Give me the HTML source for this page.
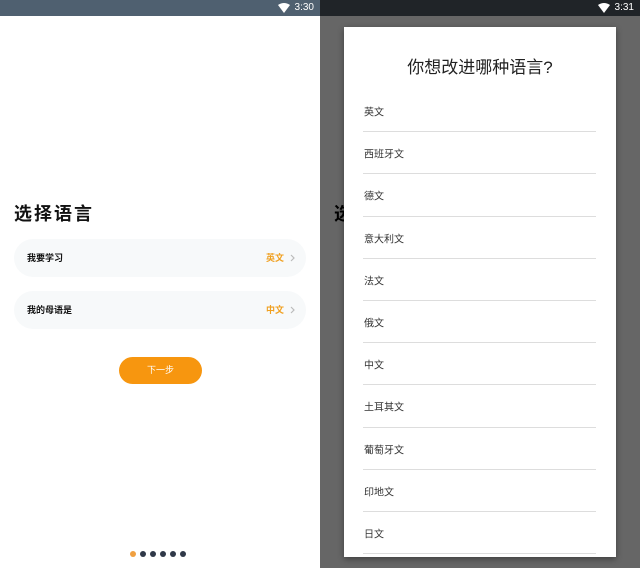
<!DOCTYPE html>
<html><head><meta charset="utf-8"><style>
*{margin:0;padding:0;box-sizing:border-box}
body{width:640px;height:568px;overflow:hidden;position:relative;background:#fff;font-family:"Liberation Sans","Noto Sans CJK SC",sans-serif}
.p{position:absolute;top:0;height:568px;width:320px;overflow:hidden}
.sb{position:absolute;left:0;top:0;width:320px;height:16px;color:#fff;font-size:10px}
.sb .t{position:absolute;right:6px;top:2px}
.sb svg{position:absolute;right:30px;top:3px}
.title{position:absolute;left:14px;top:200px;font-size:18px;font-weight:bold;color:#111;letter-spacing:2px}
.card{position:absolute;left:14px;width:292px;height:38px;border-radius:19px;background:#f7f9fa;font-size:9px;font-weight:bold}
.card .l{position:absolute;left:13px;top:12px;color:#111}
.card .r{position:absolute;right:22px;top:12px;color:#f0a020}
.card svg{position:absolute;right:11px;top:15px}
.btn{position:absolute;left:119px;top:357px;width:83px;height:27px;border-radius:14px;background:#f7960f;color:#fff;font-size:9px;text-align:center;line-height:27px}
.dot{position:absolute;top:551px;width:6px;height:6px;border-radius:3px;background:#2f3848}
.dlg{position:absolute;left:24px;top:27px;width:272px;height:530px;background:#fff;box-shadow:0 2px 6px rgba(0,0,0,.4)}
.dlg h2{position:absolute;top:26px;left:0;width:100%;text-align:center;font-size:17px;font-weight:normal;color:#222}
.it{position:absolute;left:19px;width:233px;height:42.2px;border-bottom:1.5px solid #ddd;font-size:10px;color:#333}
.it span{position:absolute;left:1px;top:21px;transform:translateY(-50%)}
</style></head><body>
<div class="p" style="left:0">
<div class="sb" style="background:#4f6070"><svg width="12" height="10" viewBox="0 0 12 10"><path d="M0 2Q6-2 12 2L6 10Z" fill="#fff"/></svg><span class="t">3:30</span></div>
<div class="title">选择语言</div>
<div class="card" style="top:239px"><span class="l">我要学习</span><span class="r">英文</span><svg width="5" height="8" viewBox="0 0 5 8"><path d="M1 1L4 4L1 7" stroke="#bbb" stroke-width="1.2" fill="none"/></svg></div>
<div class="card" style="top:291px"><span class="l">我的母语是</span><span class="r">中文</span><svg width="5" height="8" viewBox="0 0 5 8"><path d="M1 1L4 4L1 7" stroke="#bbb" stroke-width="1.2" fill="none"/></svg></div>
<div class="btn">下一步</div>
<div class="dot" style="left:130px;background:#f0a040"></div>
<div class="dot" style="left:140px"></div>
<div class="dot" style="left:150px"></div>
<div class="dot" style="left:160px"></div>
<div class="dot" style="left:170px"></div>
<div class="dot" style="left:180px"></div>
</div>
<div class="p" style="left:320px;background:#666">
<div class="sb" style="background:#202428"><svg width="12" height="10" viewBox="0 0 12 10"><path d="M0 2Q6-2 12 2L6 10Z" fill="#fff"/></svg><span class="t">3:31</span></div>
<div class="title" style="color:#000">选择语言</div>
<div class="dlg">
<h2>你想改进哪种语言?</h2>
<div class="it" style="top:63px"><span>英文</span></div>
<div class="it" style="top:105.2px"><span>西班牙文</span></div>
<div class="it" style="top:147.4px"><span>德文</span></div>
<div class="it" style="top:189.6px"><span>意大利文</span></div>
<div class="it" style="top:231.8px"><span>法文</span></div>
<div class="it" style="top:274px"><span>俄文</span></div>
<div class="it" style="top:316.2px"><span>中文</span></div>
<div class="it" style="top:358.4px"><span>土耳其文</span></div>
<div class="it" style="top:400.6px"><span>葡萄牙文</span></div>
<div class="it" style="top:442.8px"><span>印地文</span></div>
<div class="it" style="top:485px"><span>日文</span></div>
</div>
</div>
</body></html>
